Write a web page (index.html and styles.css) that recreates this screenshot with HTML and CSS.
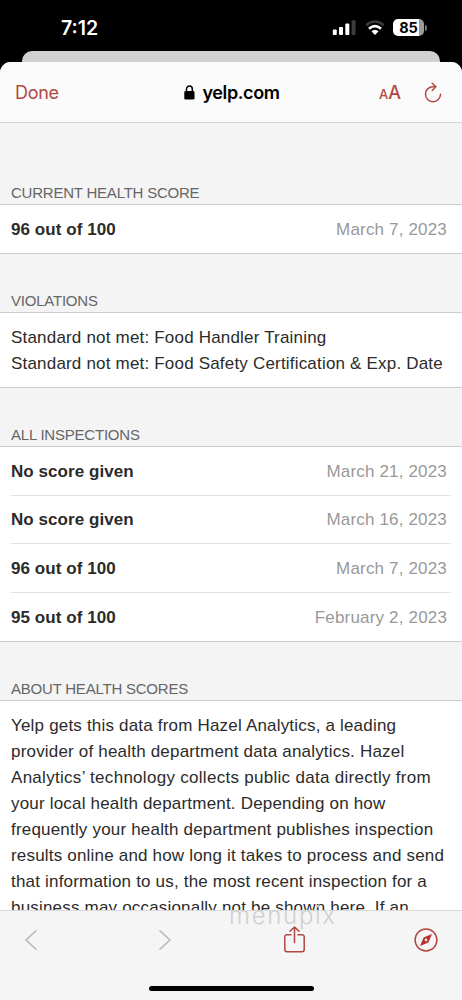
FILE: index.html
```html
<!DOCTYPE html>
<html lang="en">
<head>
    <meta charset="UTF-8">
    <meta name="viewport" content="width=device-width, initial-scale=1.0">
    <title>Health Score</title>
    <link rel="stylesheet" href="styles.css">
</head>
<body>

    <div class="status-bar">
        <span class="clock">7:12</span>
        <div class="status-icons">
            <svg class="signal" width="25" height="16" viewBox="0 0 25 16">
                <rect x="0.8" y="9.5" width="4" height="5.5" rx="1" fill="#fff"/>
                <rect x="7" y="7" width="4" height="8" rx="1" fill="#fff"/>
                <rect x="13.3" y="3.5" width="4" height="11.5" rx="1" fill="#fff"/>
                <rect x="19.6" y="0.2" width="4" height="14.8" rx="1" fill="#3c3c3c"/>
            </svg>
            <svg class="wifi" width="20" height="16" viewBox="0 0 20 16">
                <path d="M1.2 5.2Q10 -2.2 18.8 5.2" fill="none" stroke="#3c3c3c" stroke-width="2.6"/>
                <path d="M4 8.7Q10 3.4 16 8.7" fill="none" stroke="#fff" stroke-width="2.6"/>
                <path d="M6.4 11.3Q10 8.2 13.6 11.3L10 15Z" fill="#fff"/>
            </svg>
            <div class="battery"><span>85</span></div>
            <div class="battery-cap"></div>
        </div>
    </div>

    <div class="back-sheet"></div>

    <div class="sheet">
        <header class="nav-bar">
            <a class="done">Done</a>
            <div class="address">
                <svg width="11" height="15" viewBox="0 0 11 15">
                    <rect x="0.3" y="6" width="10.2" height="8.6" rx="1.4" fill="#000"/>
                    <path d="M2.5 6.5V4a2.9 2.9 0 0 1 5.8 0V6.5" fill="none" stroke="#000" stroke-width="1.5"/>
                </svg>
                <span>yelp.com</span>
            </div>
            <div class="nav-actions">
                <span class="text-size"><small>A</small>A</span>
                <svg width="18" height="21" viewBox="0 0 18 21">
                    <path d="M11 4.7H9A7.5 7.5 0 1 0 16.5 12.2" fill="none" stroke="#b14943" stroke-width="1.5" stroke-linecap="round"/>
                    <path d="M8.2 1.2L11.9 4.8L8.2 8.5" fill="none" stroke="#b14943" stroke-width="1.5" stroke-linecap="round" stroke-linejoin="round"/>
                </svg>
            </div>
        </header>

        <main>
            <h2 class="first">CURRENT HEALTH SCORE</h2>
            <ul class="list current">
                <li><b>96 out of 100</b><span>March 7, 2023</span></li>
            </ul>

            <h2>VIOLATIONS</h2>
            <div class="text-block">
                Standard not met: Food Handler Training<br>
                Standard not met: Food Safety Certification &amp; Exp. Date
            </div>

            <h2>ALL INSPECTIONS</h2>
            <ul class="list">
                <li><b>No score given</b><span>March 21, 2023</span></li>
                <li><b>No score given</b><span>March 16, 2023</span></li>
                <li><b>96 out of 100</b><span>March 7, 2023</span></li>
                <li><b>95 out of 100</b><span>February 2, 2023</span></li>
            </ul>

            <h2>ABOUT HEALTH SCORES</h2>
            <div class="text-block">
                Yelp gets this data from Hazel Analytics, a leading<br>
                provider of health department data analytics. Hazel<br>
                <span class="wide">Analytics’ technology collects public data directly from</span><br>
                your local health department. Depending on how<br>
                frequently your health department publishes inspection<br>
                results online and how long it takes to process and send<br>
                that information to us, the most recent inspection for a<br>
                business may occasionally not be shown here. If an
            </div>
        </main>

        <footer class="toolbar">
            <div class="watermark">menupix</div>
            <div class="tools">
                <div class="tool">
                    <svg width="12" height="20" viewBox="0 0 12 20">
                        <path d="M11 0.8L1 10L11 19.2" fill="none" stroke="#b5b5b5" stroke-width="1.5" stroke-linecap="round" stroke-linejoin="round"/>
                    </svg>
                </div>
                <div class="tool forward">
                    <svg width="12" height="20" viewBox="0 0 12 20">
                        <path d="M1 0.8L11 10L1 19.2" fill="none" stroke="#b5b5b5" stroke-width="1.5" stroke-linecap="round" stroke-linejoin="round"/>
                    </svg>
                </div>
                <div class="tool">
                    <svg width="21" height="27" viewBox="0 0 21 27">
                        <path d="M7 8.7H3A2.2 2.2 0 0 0 0.8 10.9V23.6A2.2 2.2 0 0 0 3 25.8H18A2.2 2.2 0 0 0 20.2 23.6V10.9A2.2 2.2 0 0 0 18 8.7H14M10.5 16.5V1.2M6 5.3L10.5 1L15 5.3" fill="none" stroke="#b04741" stroke-width="1.5" stroke-linecap="round" stroke-linejoin="round"/>
                    </svg>
                </div>
                <div class="tool">
                    <svg width="24" height="24" viewBox="0 0 24 24">
                        <circle cx="12" cy="12" r="10.9" fill="none" stroke="#b04741" stroke-width="1.5"/>
                        <path d="M18 6L14.4 14.4L6 18L9.6 9.6Z" fill="#b82f32"/>
                        <circle cx="12" cy="12" r="1.4" fill="#f5dede"/>
                    </svg>
                </div>
            </div>
            <div class="home-indicator"></div>
        </footer>
    </div>

</body>
</html>
```
FILE: styles.css
```css
* {
    box-sizing: border-box;
}
body {
    font-family: "Liberation Sans", Arial, sans-serif;
    margin: 0;
    height: 1000px;
    overflow: hidden;
    background-color: #000;
    color: #2b2b2b;
    display: flex;
    flex-direction: column;
}
svg {
    display: block;
    flex: none;
}

/* Status bar */
.status-bar {
    height: 51px;
    flex: none;
    display: flex;
    justify-content: space-between;
    align-items: flex-start;
    padding: 16px 35px 0 61px;
    color: #fff;
}
.clock {
    font-family: Inter, sans-serif;
    font-size: 19.5px;
    font-weight: 600;
    line-height: 24px;
}
.status-icons {
    display: flex;
    align-items: center;
    padding-top: 3px;
}
.signal {
    margin-right: 8px;
}
.wifi {
    margin-right: 8px;
}
.battery {
    width: 31px;
    height: 17px;
    border-radius: 5px;
    background: linear-gradient(to right, #fff 26px, #9a9a9a 26px);
    color: #000;
    font: 700 14.5px/17px Inter, sans-serif;
    text-align: center;
}
.battery-cap {
    width: 2px;
    height: 6px;
    margin-left: 1px;
    border-radius: 0 2px 2px 0;
    background-color: #777;
}

.back-sheet {
    height: 11px;
    flex: none;
    margin: 0 22px;
    background-color: #d1d2d0;
    border-radius: 10px 10px 0 0;
}

.sheet {
    flex: 1;
    min-height: 0;
    display: flex;
    flex-direction: column;
    background-color: #f4f4f4;
    border-radius: 11px 11px 0 0;
    overflow: hidden;
}

/* Browser bar */
.nav-bar {
    height: 61px;
    flex: none;
    display: grid;
    grid-template-columns: 1fr auto 1fr;
    align-items: center;
    padding: 0 20px 0 15px;
    background-color: #fbfbfb;
    border-bottom: 1px solid #d5d5d5;
    font-family: Inter, sans-serif;
    font-size: 18px;
}
.done {
    color: #b14943;
    letter-spacing: -0.3px;
}
.address {
    display: flex;
    align-items: center;
    gap: 7px;
    padding-left: 7px;
    color: #000;
    font-weight: 600;
    letter-spacing: -0.4px;
}
.nav-actions {
    display: flex;
    justify-content: flex-end;
    align-items: center;
    gap: 23px;
    color: #b14943;
}
.text-size {
    font-weight: 500;
}
.text-size small {
    font-size: 13px;
}

/* Page content */
main {
    flex: 1;
    min-height: 0;
    overflow: hidden;
}
h2 {
    height: 58px;
    margin: 0;
    padding: 37px 11px 0;
    color: #666;
    font-size: 15px;
    font-weight: normal;
    letter-spacing: -0.22px;
    line-height: 20px;
}
h2.first {
    height: 81px;
    padding-top: 60px;
}
.list {
    list-style: none;
    margin: 0;
    padding: 0 11px;
    background-color: #fff;
    border-top: 1px solid #ccc;
    border-bottom: 1px solid #ccc;
}
.list li {
    display: flex;
    justify-content: space-between;
    align-items: center;
    height: 48.5px;
    padding: 2px 4px 0 0;
    border-bottom: 1px solid #e3e3e3;
    font-size: 17px;
    letter-spacing: 0.06px;
}
.list li:last-child {
    height: 48px;
    border-bottom: none;
}
.list span {
    color: #999;
    letter-spacing: 0.17px;
}
.text-block {
    padding: 12px 11px 10px;
    background-color: #fff;
    border-top: 1px solid #ccc;
    border-bottom: 1px solid #ccc;
    font-size: 17px;
    line-height: 26px;
    letter-spacing: 0.19px;
    white-space: nowrap;
}
.wide {
    letter-spacing: 0.29px;
}

/* Bottom toolbar */
.toolbar {
    position: relative;
    height: 90px;
    flex: none;
    background-color: #f5f5f5;
    border-top: 1px solid #d9d9d9;
}
.tools {
    display: flex;
    justify-content: space-between;
    align-items: center;
    height: 57px;
    padding: 0 24px 0 19px;
}
.tool {
    width: 24px;
    display: flex;
    justify-content: center;
}
.forward {
    padding-left: 4px;
}
.watermark {
    position: absolute;
    left: 229px;
    top: -9px;
    color: #d0d0d0;
    font: 300 24px/28px Inter, sans-serif;
    letter-spacing: 1.7px;
}
.home-indicator {
    width: 165px;
    height: 5px;
    margin: 18px auto 0;
    border-radius: 3px;
    background-color: #000;
}
```
